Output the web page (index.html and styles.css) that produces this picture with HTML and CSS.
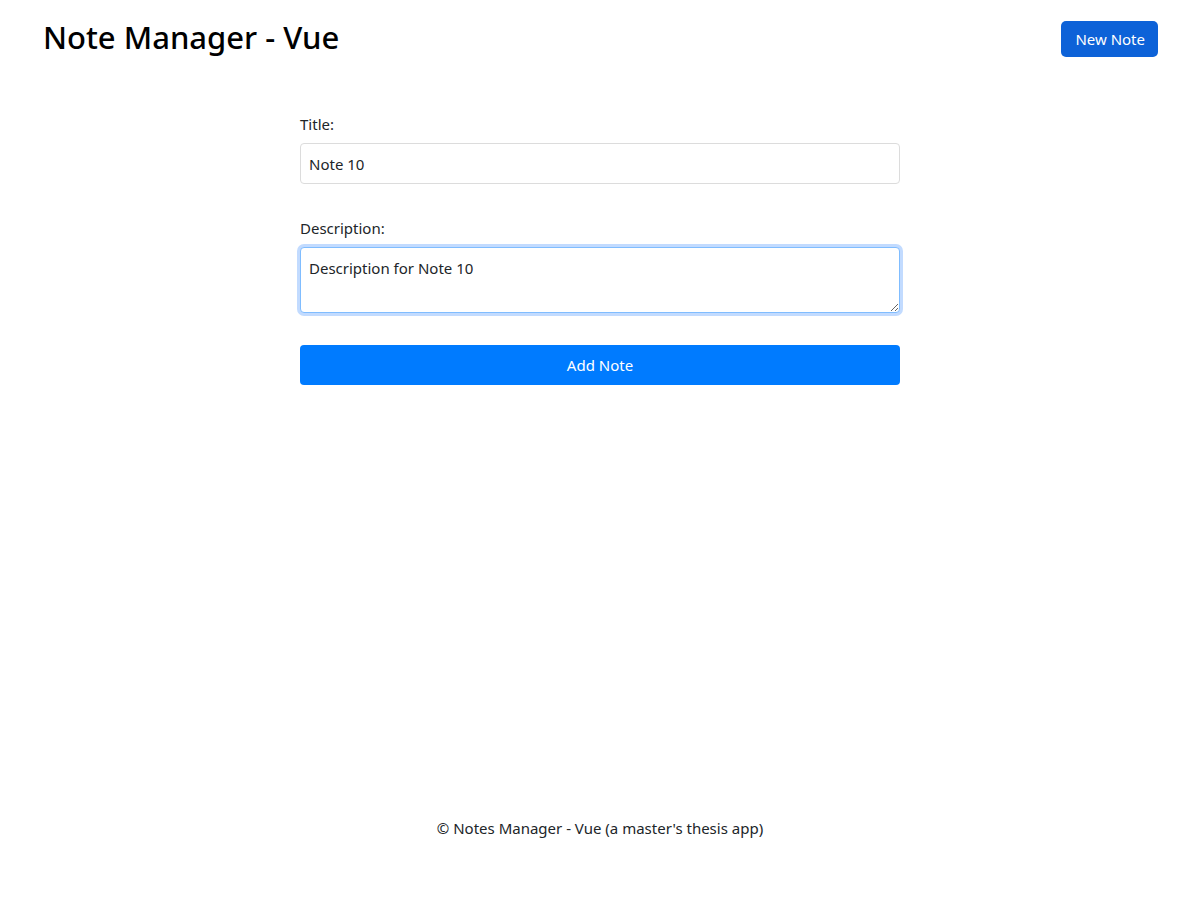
FILE: index.html
```html
<!DOCTYPE html>
<html lang="en">
<head>
<meta charset="utf-8">
<title>Note Manager - Vue</title>
<link rel="stylesheet" href="styles.css">
</head>
<body>
<div class="app">
  <header class="header">
    <h1 class="title">Note Manager - Vue</h1>
    <button class="btn btn-new">New Note</button>
  </header>
  <main class="main">
    <form class="note-form">
      <div class="field">
        <label class="label" for="title">Title:</label>
        <input class="input" id="title" type="text" value="Note 10">
      </div>
      <div class="field field-last">
        <label class="label" for="desc">Description:</label>
        <textarea class="input textarea focused" id="desc">Description for Note 10</textarea>
      </div>
      <button type="button" class="btn btn-add">Add Note</button>
    </form>
  </main>
  <footer class="footer">© Notes Manager - Vue (a master's thesis app)</footer>
</div>
</body>
</html>
```
FILE: styles.css
```css
* { box-sizing: border-box; }
html, body { margin: 0; padding: 0; background: #fff; }
body {
  font-family: "Noto Sans", "Open Sans", sans-serif;
  font-size: 15px;
  color: #212529;
}
.app {
  min-height: 900px;
  display: flex;
  flex-direction: column;
}
.header {
  display: flex;
  justify-content: space-between;
  align-items: flex-start;
  padding: 16px 42px 0 43px;
}
.title {
  margin: 0;
  font-size: 31px;
  font-weight: 500;
  color: #000;
  line-height: 42px;
}
.btn {
  font-family: inherit;
  border: none;
  color: #fff;
  cursor: pointer;
}
.btn-new {
  margin-top: 5px;
  height: 36px;
  padding: 0 13px 0 14px;
  background: #0d62d8;
  border-radius: 5px;
  font-size: 15px;
}
.main {
  display: flex;
  justify-content: center;
  padding-top: 56px;
}
.note-form {
  width: 600px;
  display: flex;
  flex-direction: column;
}
.field {
  display: flex;
  flex-direction: column;
  margin-bottom: 34px;
}
.field-last {
  margin-bottom: 32px;
}
.label {
  font-size: 15px;
  line-height: 20px;
  margin-bottom: 9px;
}
.input {
  font-family: inherit;
  font-size: 15px;
  color: #212529;
  height: 41px;
  padding: 0 8px;
  border: 1px solid #dcdcdc;
  border-radius: 4px;
  outline: none;
  background: #fff;
}
.textarea {
  height: 66px;
  padding: 10px 8px;
  line-height: 20px;
  resize: vertical;
}
.focused {
  border-color: #80bdff;
  box-shadow: 0 0 0 3px #c2dbff;
}
.btn-add {
  height: 40px;
  background: #007bff;
  border-radius: 4px;
  font-size: 15px;
}
.footer {
  margin-top: auto;
  padding-bottom: 62px;
  text-align: center;
  font-size: 15px;
  line-height: 20px;
}
```
